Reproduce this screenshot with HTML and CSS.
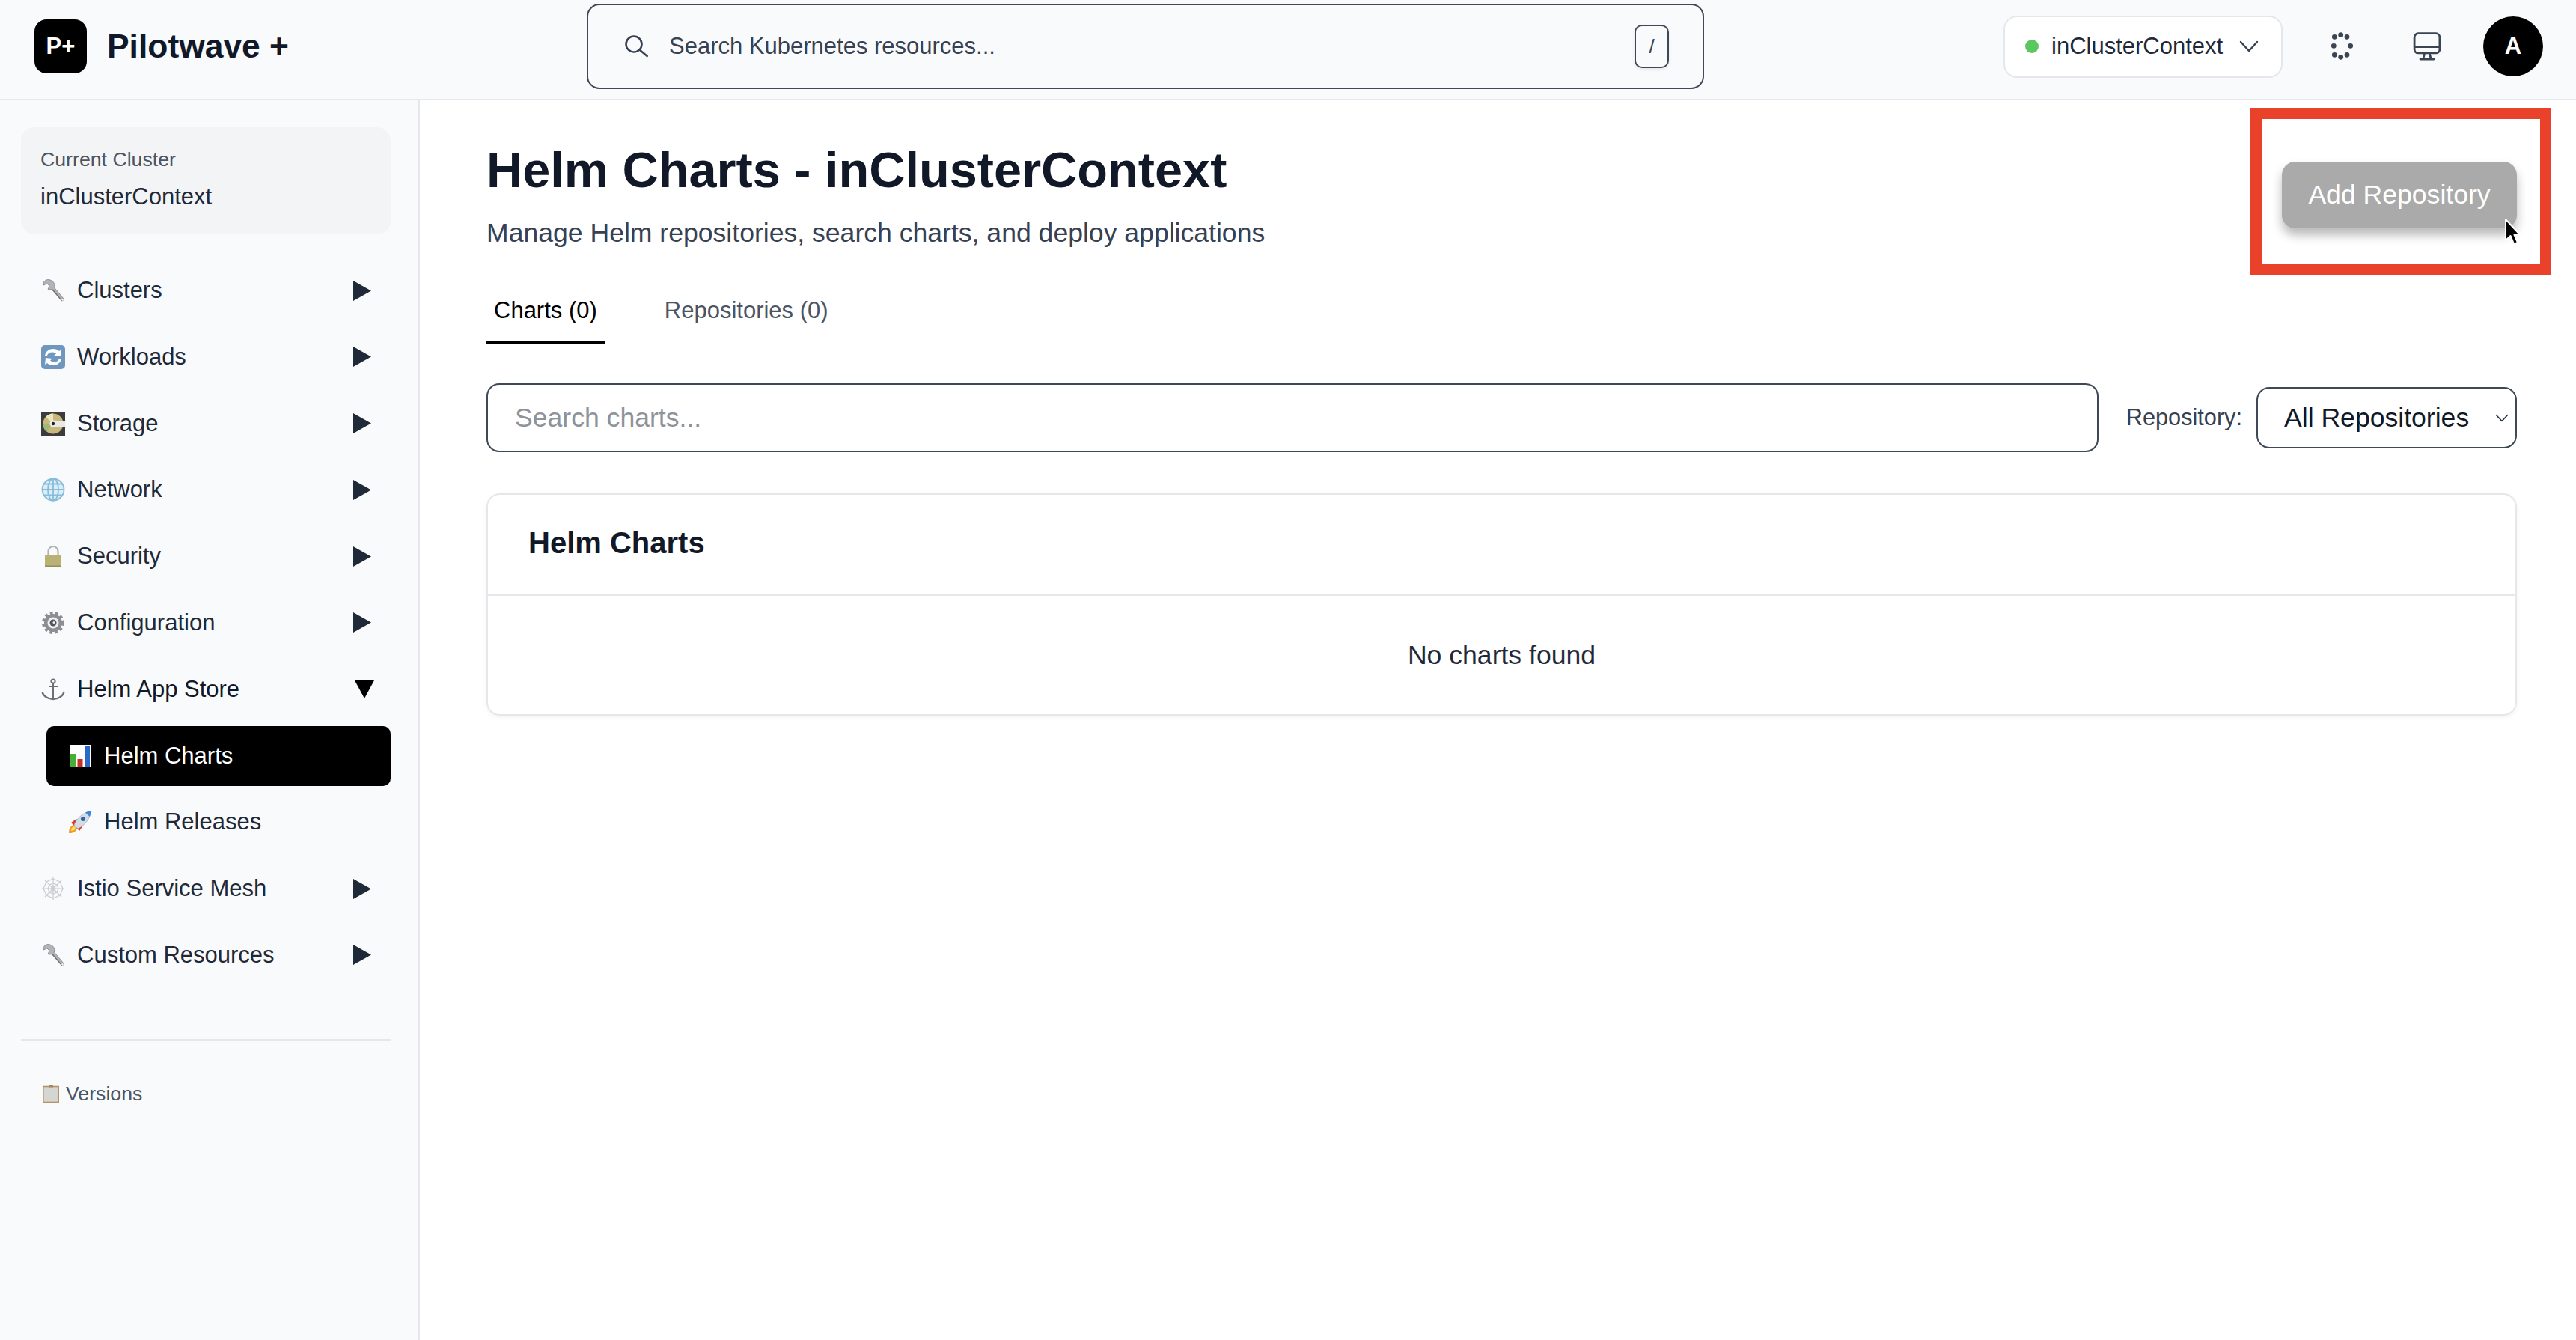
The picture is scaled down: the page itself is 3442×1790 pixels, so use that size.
FILE: index.html
```html
<!DOCTYPE html>
<html lang="en">
<head>
    <meta charset="UTF-8" />
    <title>Helm Charts - Pilotwave +</title>
    <link rel="stylesheet" href="styles.css">
</head>
<body>
    <svg class="defs" width="0" height="0">
        <defs>
            <symbol id="ico-wrench" viewBox="0 0 32 32">
                <path d="M12 2C7 0 2 4 3 9l5-2 3 3-2 4.5c3 1 5 .5 6-.5l12 15c1 2 4 0 3-2L17.5 12C19 7 16 3 12 2z" fill="#b2b2b8" stroke="#77777f" stroke-width=".7"/>
                <path d="M15 15l13 15" stroke="#7a6c64" stroke-width="1.3" fill="none"/>
                <circle cx="28.5" cy="28.5" r="1.2" fill="#f4f4f4"/>
            </symbol>
        </defs>
    </svg>

    <header class="topbar">
        <div class="brand">
            <span class="logo">P+</span>
            <span class="brand-name">Pilotwave +</span>
        </div>
        <div class="global-search">
            <svg class="search-icon" width="34" height="34" viewBox="0 0 34 34" fill="none" stroke="#374151" stroke-width="2.6" stroke-linecap="round"><circle cx="13" cy="14" r="10.5"/><path d="M20.5 21.5L30.7 30"/></svg>
            <span class="global-search-text">Search Kubernetes resources...</span>
            <kbd class="kbd">/</kbd>
        </div>
        <div class="topbar-right">
            <div class="context-select">
                <span class="status-dot"></span>
                <span class="context-name">inClusterContext</span>
                <svg width="26" height="16" viewBox="0 0 26 16" fill="none" stroke="#374151" stroke-width="2.4" stroke-linecap="round" stroke-linejoin="round"><path d="M2 2l11 12L24 2"/></svg>
            </div>
            <span class="icon-btn">
                <svg width="40" height="40" viewBox="0 0 40 40" fill="#3b4452"><circle cx="10.3" cy="7.3" r="3.4"/><circle cx="18.7" cy="4.7" r="3.4"/><circle cx="27" cy="7.3" r="3.4"/><circle cx="9.3" cy="19.3" r="3.4"/><circle cx="31.7" cy="19.3" r="3.4"/><circle cx="10.3" cy="31.3" r="3.4"/><circle cx="18.7" cy="34.3" r="3.4"/><circle cx="27" cy="31.3" r="3.4"/></svg>
            </span>
            <span class="icon-btn">
                <svg width="40" height="40" viewBox="0 0 40 40" fill="none" stroke="#3b4452" stroke-width="2.8"><rect x="3.1" y="2.7" width="33.8" height="26.2" rx="5"/><path d="M3 20.7h34"/><path d="M16.5 30l-1.5 6M23.5 30l1.5 6"/><path d="M11 37h18" stroke-linecap="round"/></svg>
            </span>
            <span class="avatar">A</span>
        </div>
    </header>

    <div class="layout">
        <aside class="sidebar">
            <div class="cluster-box">
                <div class="cluster-label">Current Cluster</div>
                <div class="cluster-name">inClusterContext</div>
            </div>

            <nav class="nav">
                <a class="nav-item">
                    <svg class="nav-icon"><use href="#ico-wrench"/></svg>
                    <span class="nav-text">Clusters</span>
                    <svg class="arrow" viewBox="0 0 24 27"><path d="M0 0l24 13.5L0 27z"/></svg>
                </a>
                <a class="nav-item">
                    <svg class="nav-icon" viewBox="0 0 32 32">
                        <rect width="32" height="32" rx="5" fill="#7097bd"/>
                        <path d="M5 14c1-6 6-9 11-9 3 0 6 1 8 3l3-2-1 9-9-1 3-2.5c-1.5-1.2-3-2-5-2-3.500 0-6 1.500-7 4.500z" fill="#fff"/>
                        <path d="M27 18c-1 6-6 9-11 9-3 0-6-1-8-3l-3 2 1-9 9 1-3 2.5c1.5 1.2 3 2 5 2 3.500 0 6-1.500 7-4.500z" fill="#fff"/>
                    </svg>
                    <span class="nav-text">Workloads</span>
                    <svg class="arrow" viewBox="0 0 24 27"><path d="M0 0l24 13.5L0 27z"/></svg>
                </a>
                <a class="nav-item">
                    <svg class="nav-icon" viewBox="0 0 32 32">
                        <rect width="32" height="32" fill="#3c3c3c"/>
                        <circle cx="16" cy="16" r="13.5" fill="#c9b978"/>
                        <path d="M16 16L6 7a13.5 13.5 0 0 1 10-4.5z" fill="#ece6c0"/>
                        <path d="M16 16L7 27a13.5 13.5 0 0 1-4-11z" fill="#9dba7a"/>
                        <rect x="18" y="12" width="14" height="9" fill="#e8e8e8"/>
                        <circle cx="16" cy="16" r="4.5" fill="#eee"/>
                        <circle cx="16" cy="16" r="2.2" fill="#222"/>
                    </svg>
                    <span class="nav-text">Storage</span>
                    <svg class="arrow" viewBox="0 0 24 27"><path d="M0 0l24 13.5L0 27z"/></svg>
                </a>
                <a class="nav-item">
                    <svg class="nav-icon" viewBox="0 0 32 32" fill="none" stroke="#86bcdc" stroke-width="1.8">
                        <circle cx="16" cy="16" r="14.5" fill="#dcedf6"/>
                        <ellipse cx="16" cy="16" rx="7" ry="14.5"/>
                        <path d="M16 1.5v29M1.5 16h29M4 8.5h24M4 23.5h24"/>
                    </svg>
                    <span class="nav-text">Network</span>
                    <svg class="arrow" viewBox="0 0 24 27"><path d="M0 0l24 13.5L0 27z"/></svg>
                </a>
                <a class="nav-item">
                    <svg class="nav-icon" viewBox="0 0 32 32">
                        <path d="M9.5 15V9.5a6.5 6.5 0 0 1 13 0V15" fill="none" stroke="#b0b3b8" stroke-width="2.2"/>
                        <rect x="5" y="14" width="22" height="17" rx="1.5" fill="#bab274"/>
                        <rect x="5" y="28.5" width="22" height="2.5" fill="#958e58"/>
                    </svg>
                    <span class="nav-text">Security</span>
                    <svg class="arrow" viewBox="0 0 24 27"><path d="M0 0l24 13.5L0 27z"/></svg>
                </a>
                <a class="nav-item">
                    <svg class="nav-icon" viewBox="0 0 32 32">
                        <circle cx="16" cy="16" r="12" fill="#8b8f94" stroke="#8b8f94" stroke-width="6" stroke-dasharray="3.5 3.04"/>
                        <circle cx="16" cy="16" r="11" fill="#8b8f94"/>
                        <circle cx="16" cy="16" r="7.5" fill="#eef0f2"/>
                        <circle cx="16" cy="16" r="4.5" fill="#50555b"/>
                        <circle cx="17" cy="15.5" r="1.5" fill="#eef0f2"/>
                    </svg>
                    <span class="nav-text">Configuration</span>
                    <svg class="arrow" viewBox="0 0 24 27"><path d="M0 0l24 13.5L0 27z"/></svg>
                </a>
                <a class="nav-item is-open">
                    <svg class="nav-icon" viewBox="0 0 32 32" fill="none" stroke="#6b7077" stroke-width="2">
                        <circle cx="16" cy="5" r="2.6"/>
                        <path d="M16 8v20M10 12h12"/>
                        <path d="M1.5 19c1 6 8 10 14.5 10s13.5-4 14.5-10" stroke-width="2.4"/>
                    </svg>
                    <span class="nav-text">Helm App Store</span>
                    <svg class="arrow-down" viewBox="0 0 26 24"><path d="M0 0h26L13 24z"/></svg>
                </a>
                <a class="nav-item nav-sub is-active">
                    <svg class="nav-icon" viewBox="0 0 32 32">
                        <rect x="2" y="1" width="28" height="30" fill="#fff"/>
                        <rect x="3" y="13" width="7" height="18" fill="#45b035"/>
                        <rect x="12.5" y="20" width="7" height="11" fill="#c9301f"/>
                        <rect x="22" y="3" width="7" height="28" fill="#2c68c8"/>
                    </svg>
                    <span class="nav-text">Helm Charts</span>
                </a>
                <a class="nav-item nav-sub">
                    <svg class="nav-icon" viewBox="0 0 32 32">
                        <path d="M1 31c0-6 2-9 6-11l5 5c-2 4-5 6-11 6z" fill="#f0982a"/>
                        <path d="M4 28c0-3 1-5 4-6l2 2c-1 3-3 4-6 4z" fill="#f7e05a"/>
                        <path d="M4 17l7-5 3 3-6 6zM15 28l5-7-3-3-6 6z" fill="#d8392b"/>
                        <path d="M8 20C12 10 20 4 31 1c-2 11-8 19-18 24z" fill="#d4dbe4" stroke="#9aa6b4" stroke-width=".7"/>
                        <path d="M23 3.5c2.5-1 5-2 8-2.5-.4 3-1.2 5.5-2.2 8z" fill="#3f86d8"/>
                        <circle cx="20" cy="12" r="3" fill="#34649f"/>
                    </svg>
                    <span class="nav-text">Helm Releases</span>
                </a>
                <a class="nav-item">
                    <svg class="nav-icon" viewBox="0 0 32 32" fill="none" stroke="#c9cdd1" stroke-width="1.2">
                        <path d="M16 1v30M1 16h30M5 5l22 22M27 5L5 27"/>
                        <path d="M16 3l9 4 4 9-4 9-9 4-9-4-4-9 4-9z"/>
                        <path d="M16 9l5 2 2 5-2 5-5 2-5-2-2-5 2-5z"/>
                        <path d="M16 13l2 1 1 2-1 2-2 1-2-1-1-2 1-2z"/>
                    </svg>
                    <span class="nav-text">Istio Service Mesh</span>
                    <svg class="arrow" viewBox="0 0 24 27"><path d="M0 0l24 13.5L0 27z"/></svg>
                </a>
                <a class="nav-item">
                    <svg class="nav-icon"><use href="#ico-wrench"/></svg>
                    <span class="nav-text">Custom Resources</span>
                    <svg class="arrow" viewBox="0 0 24 27"><path d="M0 0l24 13.5L0 27z"/></svg>
                </a>
            </nav>

            <div class="versions">
                <svg class="versions-icon" viewBox="0 0 22 24">
                    <rect x="0.8" y="2.5" width="20.4" height="21" fill="#d5d5d2" stroke="#b39468" stroke-width="1.6"/>
                    <rect x="8" y="0.5" width="6" height="3" fill="#9c8a6a"/>
                </svg>
                <span>Versions</span>
            </div>
        </aside>

        <main class="content">
            <div class="page-head">
                <div>
                    <h1 class="page-title">Helm Charts - inClusterContext</h1>
                    <p class="page-sub">Manage Helm repositories, search charts, and deploy applications</p>
                </div>
                <button class="btn-add">Add Repository</button>
            </div>

            <div class="tabs">
                <span class="tab is-active">Charts (0)</span>
                <span class="tab">Repositories (0)</span>
            </div>

            <div class="filters">
                <input class="chart-search" type="text" placeholder="Search charts..." />
                <label class="repo-label" for="repo">Repository:</label>
                <div class="select-wrap">
                    <select class="repo-select" id="repo">
                        <option>All Repositories</option>
                    </select>
                    <svg class="select-arrow" width="18" height="11" viewBox="0 0 18 11" fill="none" stroke="#1f2937" stroke-width="1.6" stroke-linecap="round" stroke-linejoin="round"><path d="M1.5 1.5L9 9.5l7.5-8"/></svg>
                </div>
            </div>

            <section class="card">
                <h3 class="card-title">Helm Charts</h3>
                <div class="card-empty">No charts found</div>
            </section>
        </main>
    </div>

    <!-- annotation drawn over the screenshot -->
    <div class="highlight"></div>
    <svg class="cursor" width="22" height="38" viewBox="0 0 22 38"><path d="M2 2v28l6.5-6 4.5 11 5-2-4.5-10.500H21z" fill="#000" stroke="#fff" stroke-width="2" stroke-linejoin="round"/></svg>
</body>
</html>
```

FILE: styles.css
```css
* {
    box-sizing: border-box;
}

html, body {
    margin: 0;
    padding: 0;
}

body {
    position: relative;
    width: 3442px;
    height: 1790px;
    overflow: hidden;
    font-family: "Liberation Sans", Arial, sans-serif;
    font-size: 31px;
    color: #111827;
    background: #fff;
}

.defs {
    position: absolute;
}

/* top bar */
.topbar {
    display: flex;
    align-items: center;
    height: 134px;
    padding: 0 44px 8px 46px;
    background: #f9fafb;
    border-bottom: 2px solid #e5e7eb;
}

.brand {
    display: flex;
    align-items: center;
    gap: 27px;
    width: 738px;
}

.logo {
    display: flex;
    align-items: center;
    justify-content: center;
    width: 70px;
    height: 72px;
    border-radius: 16px;
    background: #000;
    color: #fff;
    font-size: 31px;
    font-weight: bold;
}

.brand-name {
    font-size: 44.4px;
    font-weight: bold;
    color: #111827;
}

.global-search {
    display: flex;
    align-items: center;
    width: 1493px;
    height: 114px;
    padding: 0 45px 0 48px;
    border: 2px solid #3f4856;
    border-radius: 17px;
}

.global-search-text {
    flex: 1;
    margin-left: 26px;
    font-size: 31px;
    color: #374151;
}

.kbd {
    display: flex;
    align-items: center;
    justify-content: center;
    width: 46px;
    height: 58px;
    border: 2px solid #3f4856;
    border-radius: 10px;
    font-family: "Liberation Sans", Arial, sans-serif;
    font-size: 26px;
    color: #374151;
    box-shadow: 0 2px 4px rgba(0, 0, 0, 0.08);
}

.topbar-right {
    display: flex;
    align-items: center;
    gap: 36px;
    margin-left: auto;
}

.context-select {
    display: flex;
    align-items: center;
    width: 373px;
    height: 83px;
    margin-right: 4px;
    padding-left: 27px;
    background: #fff;
    border: 2px solid #e5e7eb;
    border-radius: 18px;
}

.status-dot {
    width: 18px;
    height: 18px;
    border-radius: 50%;
    background: #5ac85f;
}

.context-name {
    margin: 0 22px 0 17px;
    font-size: 31px;
    color: #1f2937;
}

.icon-btn {
    display: flex;
    align-items: center;
    justify-content: center;
    width: 78px;
    height: 78px;
}

.avatar {
    display: flex;
    align-items: center;
    justify-content: center;
    width: 80px;
    height: 80px;
    border-radius: 50%;
    background: #000;
    color: #fff;
    font-size: 31px;
    font-weight: bold;
}

/* page layout */
.layout {
    display: flex;
    height: 1656px;
}

.sidebar {
    flex: none;
    width: 561px;
    padding: 36px 37px 0 28px;
    background: #f9fafb;
    border-right: 2px solid #e5e7eb;
}

.cluster-box {
    height: 143px;
    padding: 25px 26px;
    border-radius: 18px;
    background: #f3f4f6;
}

.cluster-label {
    font-size: 26.7px;
    line-height: 36px;
    color: #4b5563;
}

.cluster-name {
    margin-top: 12px;
    font-size: 31px;
    line-height: 40px;
    color: #1f2937;
}

.nav {
    display: flex;
    flex-direction: column;
    gap: 8.8px;
    margin-top: 35px;
}

.nav-item {
    display: flex;
    align-items: center;
    height: 80px;
    padding: 0 26px 0 27px;
    border-radius: 10px;
    font-size: 31px;
    color: #1f2937;
}

.nav-icon {
    flex: none;
    width: 32px;
    height: 32px;
}

.nav-text {
    flex: 1;
    margin-left: 16px;
}

.arrow {
    flex: none;
    width: 24px;
    height: 27px;
    fill: #1f2937;
}

.arrow-down {
    flex: none;
    width: 26px;
    height: 24px;
    margin-right: -4px;
    fill: #000;
}

.is-open .nav-text {
    color: #111827;
}

.nav-sub {
    margin-left: 34px;
    padding-left: 29px;
}

.nav-sub .nav-text {
    margin-left: 16px;
}

.nav-sub.is-active {
    background: #000;
    color: #fff;
}

.versions {
    display: flex;
    align-items: center;
    gap: 9px;
    margin-top: 72px;
    padding: 56px 0 0 29px;
    border-top: 2px solid #e5e7eb;
    font-size: 26.7px;
    color: #4b5563;
}

.versions-icon {
    width: 22px;
    height: 24px;
}

/* main content */
.content {
    flex: 1;
    padding: 57px 79px 0 89px;
}

.page-head {
    display: flex;
    justify-content: space-between;
    align-items: flex-start;
}

.page-title {
    margin: 0;
    font-size: 66.7px;
    line-height: 72px;
    font-weight: bold;
    color: #111827;
}

.page-sub {
    margin: 23px 0 0;
    font-size: 35.6px;
    line-height: 50px;
    color: #374151;
}

.btn-add {
    width: 314px;
    height: 89px;
    margin-top: 25px;
    border: 0;
    border-radius: 18px;
    background: #aaa;
    color: #fff;
    font-family: inherit;
    font-size: 35.6px;
    box-shadow: 0 9px 14px rgba(0, 0, 0, 0.28);
}

.tabs {
    display: flex;
    gap: 70px;
    margin-top: 39px;
}

.tab {
    padding: 20px 10px;
    font-size: 31px;
    line-height: 40px;
    color: #4b5563;
    border-bottom: 4px solid transparent;
}

.tab.is-active {
    color: #000;
    border-bottom-color: #000;
}

.filters {
    display: flex;
    align-items: center;
    margin-top: 53px;
}

.chart-search {
    flex: 1;
    height: 92px;
    padding: 0 36px;
    border: 2px solid #3f4856;
    border-radius: 17px;
    outline: none;
    font-family: inherit;
    font-size: 35.6px;
    color: #111827;
}

.chart-search::placeholder {
    color: #8e9299;
}

.repo-label {
    margin: 0 19px 0 37px;
    font-size: 30.7px;
    color: #374151;
}

.select-wrap {
    position: relative;
}

.repo-select {
    display: block;
    width: 348px;
    height: 82px;
    padding: 0 0 0 35px;
    border: 2px solid #3f4856;
    border-radius: 17px;
    background: #fff;
    font-family: inherit;
    font-size: 35.6px;
    color: #111827;
    appearance: none;
}

.select-arrow {
    position: absolute;
    top: 36px;
    right: 11px;
}

.card {
    margin-top: 55px;
    border: 2px solid #e5e7eb;
    border-radius: 18px;
    box-shadow: 0 2px 6px rgba(0, 0, 0, 0.06);
}

.card-title {
    height: 135px;
    margin: 0;
    padding: 42px 54px 0;
    font-size: 40px;
    line-height: 44px;
    font-weight: bold;
    color: #111827;
    border-bottom: 2px solid #e5e7eb;
}

.card-empty {
    padding: 58px 0;
    font-size: 35.6px;
    line-height: 42px;
    text-align: center;
    color: #1f2937;
}

/* annotation + mouse pointer */
.highlight {
    position: absolute;
    top: 144px;
    left: 3007px;
    width: 402px;
    height: 223px;
    border: 15px solid #e9412a;
}

.cursor {
    position: absolute;
    top: 291px;
    left: 3346px;
}
```
